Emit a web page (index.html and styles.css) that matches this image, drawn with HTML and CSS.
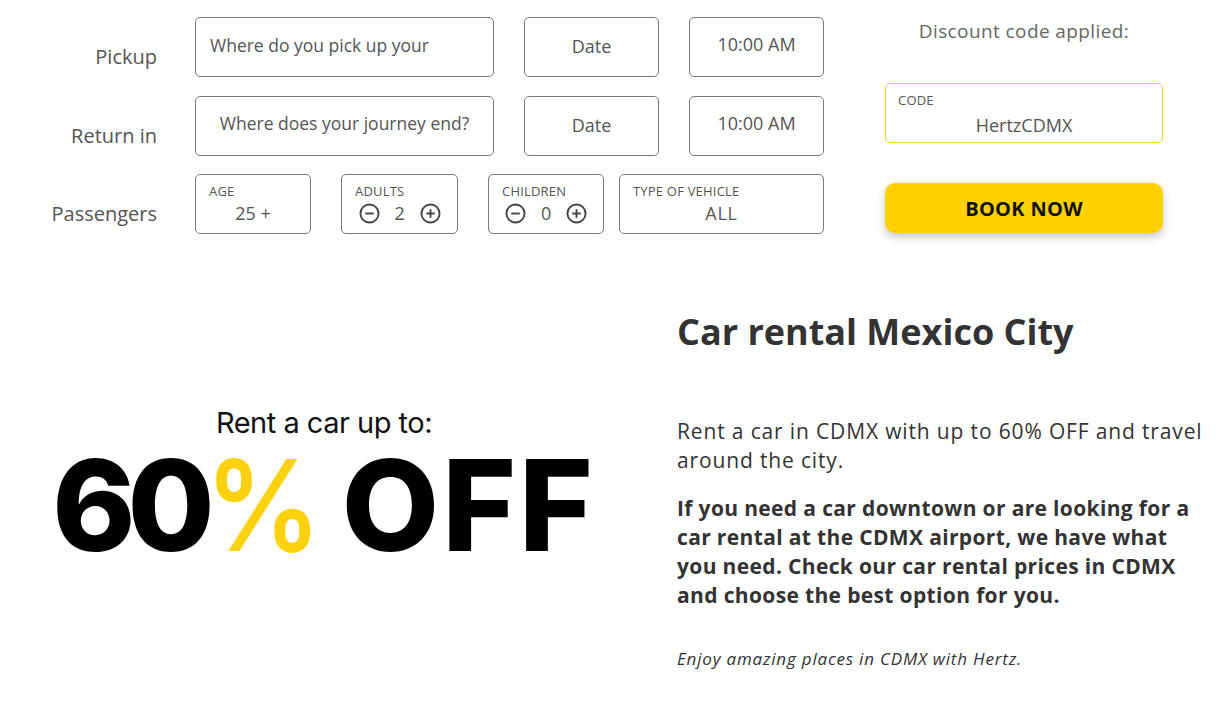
FILE: index.html
```html
<!DOCTYPE html>
<html lang="en">
<head>
<meta charset="utf-8">
<title>Car rental Mexico City</title>
<link rel="stylesheet" href="styles.css">
</head>
<body>
<main class="page">
  <section class="booking">
    <div class="form">
      <div class="row">
        <div class="row-label">Pickup</div>
        <div class="fields">
          <div class="field place place-left">Where do you pick up your</div>
          <div class="field short date">Date</div>
          <div class="field short time">10:00 AM</div>
        </div>
      </div>
      <div class="row">
        <div class="row-label">Return in</div>
        <div class="fields">
          <div class="field place">Where does your journey end?</div>
          <div class="field short date">Date</div>
          <div class="field short time">10:00 AM</div>
        </div>
      </div>
      <div class="row">
        <div class="row-label">Passengers</div>
        <div class="fields pax">
          <div class="field stack age">
            <div class="mini">AGE</div>
            <div class="value">25 +</div>
          </div>
          <div class="field stack counter">
            <div class="mini">ADULTS</div>
            <div class="value count">
              <svg class="ico" viewBox="0 0 22 22"><circle cx="11" cy="11" r="9.5"/><line x1="6.5" y1="11" x2="15.5" y2="11"/></svg>
              <span class="num">2</span>
              <svg class="ico" viewBox="0 0 22 22"><circle cx="11" cy="11" r="9.5"/><line x1="6.5" y1="11" x2="15.5" y2="11"/><line x1="11" y1="6.5" x2="11" y2="15.5"/></svg>
            </div>
          </div>
          <div class="field stack counter children">
            <div class="mini">CHILDREN</div>
            <div class="value count">
              <svg class="ico" viewBox="0 0 22 22"><circle cx="11" cy="11" r="9.5"/><line x1="6.5" y1="11" x2="15.5" y2="11"/></svg>
              <span class="num">0</span>
              <svg class="ico" viewBox="0 0 22 22"><circle cx="11" cy="11" r="9.5"/><line x1="6.5" y1="11" x2="15.5" y2="11"/><line x1="11" y1="6.5" x2="11" y2="15.5"/></svg>
            </div>
          </div>
          <div class="field stack vehicle">
            <div class="mini">TYPE OF VEHICLE</div>
            <div class="value">ALL</div>
          </div>
        </div>
      </div>
    </div>
    <aside class="promo">
      <div class="promo-title">Discount code applied:</div>
      <div class="code">
        <div class="mini">CODE</div>
        <div class="code-value">HertzCDMX</div>
      </div>
      <button class="book">BOOK NOW</button>
    </aside>
  </section>

  <section class="info">
    <div class="banner">
      <div class="banner-sub">Rent a car up to:</div>
      <div class="banner-big"><span class="digits">60</span><span class="pct">%</span> <span class="off">OFF</span></div>
    </div>
    <div class="text">
      <h1 class="title">Car rental Mexico City</h1>
      <p class="lead">Rent a car in CDMX with up to 60% OFF and travel around the city.</p>
      <p class="strong">If you need a car downtown or are looking for a car rental at the CDMX airport, we have what you need. Check our car rental prices in CDMX and choose the best option for you.</p>
      <p class="note">Enjoy amazing places in CDMX with Hertz.</p>
    </div>
  </section>
</main>
</body>
</html>
```

FILE: styles.css
```css
html, body {
  margin: 0;
  padding: 0;
  background: #ffffff;
}

.page {
  font-family: "Open Sans", "Liberation Sans", sans-serif;
  color: #555555;
}

/* ---------- booking form ---------- */
.booking {
  display: flex;
  padding-top: 17px;
}

.form {
  display: flex;
  flex-direction: column;
  gap: 18.5px;
  width: 824px;
  flex-shrink: 0;
}

.row {
  display: flex;
  align-items: center;
}

.row-label {
  width: 157px;
  margin-right: 38px;
  flex-shrink: 0;
  text-align: right;
  font-size: 20px;
  line-height: 24px;
  padding-top: 20px;
  color: #555555;
}

.fields {
  display: flex;
  gap: 30px;
}

.field {
  box-sizing: border-box;
  height: 60px;
  flex-shrink: 0;
  border: 1px solid #7a7a7a;
  border-radius: 5px;
  display: flex;
  align-items: center;
  justify-content: center;
  font-size: 17.5px;
  color: #555555;
  white-space: nowrap;
}

.place {
  width: 299px;
  padding-bottom: 5px;
}

.place-left {
  justify-content: flex-start;
  padding-left: 14px;
}

.short {
  width: 135px;
  font-size: 18px;
}

.date {
  padding-bottom: 2px;
}

.time {
  padding-bottom: 6px;
}

.fields.pax {
  gap: 0;
}

.stack {
  flex-direction: column;
  align-items: stretch;
  justify-content: flex-start;
  padding: 8px 13px 0;
}

.age {
  width: 116px;
  margin-right: 30px;
}

.counter {
  width: 117px;
  margin-right: 30px;
}

.counter.children {
  width: 116px;
  margin-right: 15px;
}

.vehicle {
  width: 205px;
}

.mini {
  font-size: 13px;
  line-height: 16px;
  letter-spacing: 0.2px;
  color: #555555;
  text-transform: uppercase;
}

.value {
  margin-top: 2px;
  font-size: 18px;
  line-height: 24px;
  text-align: center;
}

.vehicle .value {
  letter-spacing: 0.8px;
}

.count {
  display: flex;
  align-items: center;
  justify-content: center;
  gap: 15px;
}

.num {
  width: 10px;
  text-align: center;
}

.ico {
  width: 21px;
  height: 21px;
  fill: none;
  stroke: #444444;
  stroke-width: 2;
}

/* ---------- promo column ---------- */
.promo {
  width: 278px;
  margin-left: 61px;
  display: flex;
  flex-direction: column;
}

.promo-title {
  text-align: center;
  font-size: 19px;
  line-height: 26px;
  letter-spacing: 0.4px;
  color: #666666;
  margin-top: 1px;
}

.code {
  box-sizing: border-box;
  margin-top: 39px;
  height: 60px;
  border: 1px solid #f5cf3a;
  border-radius: 5px;
  padding: 9px 12px 0;
}

.code .mini {
  line-height: 14px;
}

.code-value {
  margin-top: 6px;
  text-align: center;
  font-size: 18px;
  line-height: 24px;
  color: #555555;
}

.book {
  margin-top: 40px;
  height: 50px;
  border: none;
  border-radius: 10px;
  background: #ffd100;
  box-shadow: 0 4px 8px rgba(0, 0, 0, 0.22);
  font-family: inherit;
  font-weight: 700;
  font-size: 20px;
  letter-spacing: 0.3px;
  color: #111111;
  padding: 0;
}

/* ---------- info section ---------- */
.info {
  display: flex;
  margin-top: 76px;
}

.banner {
  width: 648px;
  flex-shrink: 0;
  padding-top: 96px;
  text-align: center;
  font-family: "Inter", "Liberation Sans", sans-serif;
  color: #111111;
}

.banner-sub {
  font-size: 29px;
  line-height: 34px;
  letter-spacing: -0.5px;
}

.banner-big {
  font-size: 126px;
  line-height: 130px;
  font-weight: 800;
  letter-spacing: -6px;
  color: #000000;
  white-space: nowrap;
}

.digits {
  letter-spacing: -8px;
}

.pct {
  display: inline-block;
  color: #fcd20f;
  font-weight: 600;
  letter-spacing: 0;
  transform: scaleX(0.92);
  margin-left: -7px;
  margin-right: -6px;
}

.off {
  letter-spacing: 3px;
}

.text {
  width: 530px;
  margin-left: 29px;
  color: #333333;
}

.title {
  margin: 0;
  font-size: 36px;
  line-height: 44px;
  font-weight: 700;
  color: #333333;
}

.lead {
  margin: 63px 0 0;
  font-size: 21px;
  line-height: 29px;
  letter-spacing: 0.85px;
}

.strong {
  margin: 19px 0 0;
  font-size: 21px;
  line-height: 29px;
  letter-spacing: 0.35px;
  font-weight: 700;
}

.note {
  margin: 38px 0 0;
  font-size: 17px;
  line-height: 22px;
  letter-spacing: 0.8px;
  font-style: italic;
}
```
